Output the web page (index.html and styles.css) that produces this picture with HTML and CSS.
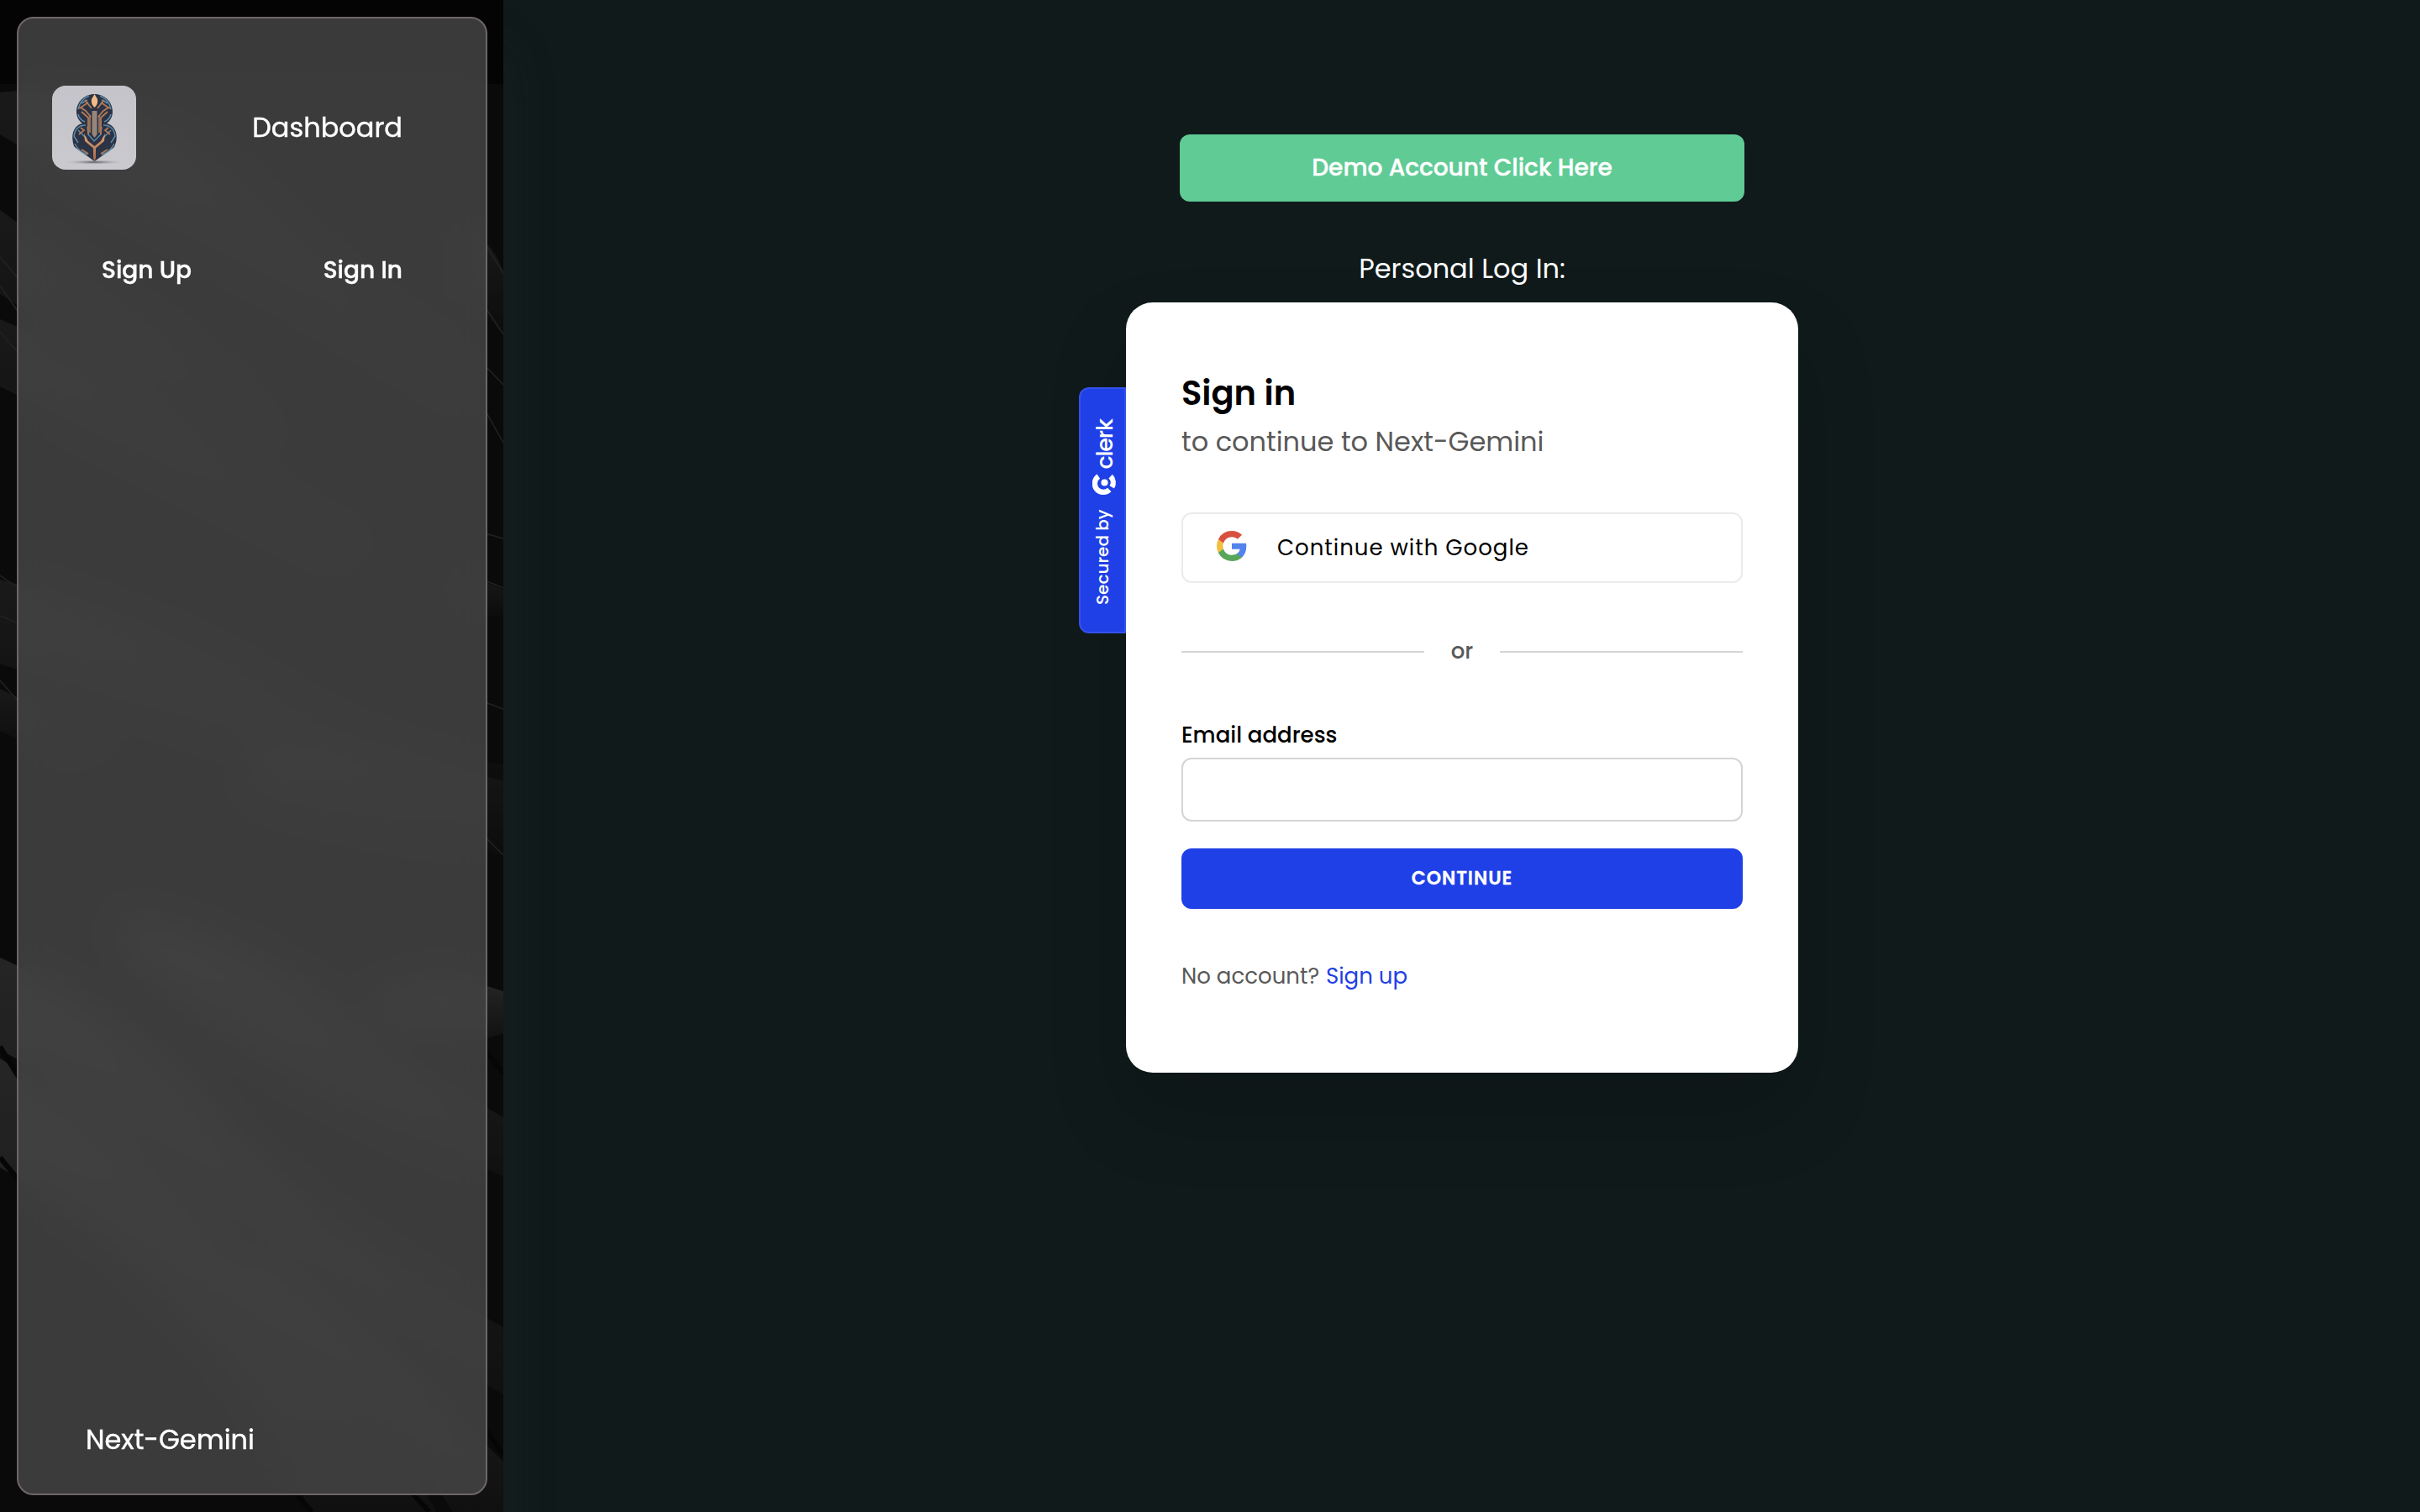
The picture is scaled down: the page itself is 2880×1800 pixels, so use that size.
FILE: index.html
```html
<!DOCTYPE html>
<html lang="en">
<head>
<meta charset="utf-8">
<title>Next-Gemini</title>
<link rel="stylesheet" href="styles.css">
</head>
<body>
<div class="app">
  <aside class="sidebar">
    <svg class="backdrop" viewBox="0 0 600 1800" preserveAspectRatio="none" aria-hidden="true">
      <defs>
        <linearGradient id="leaf" x1="0" y1="0" x2="0" y2="1">
          <stop offset="0" stop-color="#202020"/><stop offset="1" stop-color="#0e0e0e"/>
        </linearGradient>
        <linearGradient id="leafLight" x1="0" y1="0" x2="0" y2="1">
          <stop offset="0" stop-color="#303030"/><stop offset="1" stop-color="#141414"/>
        </linearGradient>
      </defs>
      <rect width="600" height="1800" fill="#0c0c0c"/>
      <rect width="600" height="100" fill="#030303"/>
      <g fill="url(#leaf)">
        <path d="M0 110Q150 90 300 230T560 420V500Q400 380 250 300T0 160Z"/>
        <path d="M0 250L150 360Q260 430 340 520L300 540Q150 440 0 350Z"/>
        <path d="M0 380Q120 430 240 520T440 640L400 680Q200 560 0 460Z"/>
        <path d="M0 690Q200 740 330 820T600 910V960Q400 930 260 880T0 790Z"/>
        <path d="M0 820Q60 850 140 880L90 900Q40 890 0 870Z"/>
        <path d="M560 276Q590 290 600 325V400L560 350Z"/>
        <path d="M560 685L600 702V735L560 728Z"/>
        <path d="M300 880Q420 880 600 930V1018Q470 1000 300 950Z"/>
      </g>
      <g fill="url(#leafLight)">
        <path d="M150 1090Q320 1120 460 1250L600 1330V1400Q420 1330 300 1250T150 1130Z"/>
        <path d="M0 1140Q160 1210 260 1330T600 1580V1660Q360 1520 230 1410T0 1250Z"/>
        <path d="M0 1260L140 1350Q300 1480 400 1620T520 1800H370Q300 1640 200 1540T0 1390Z"/>
        <path d="M440 1190Q520 1150 600 1180V1230Q520 1260 440 1210Z"/>
        <path d="M300 1490Q460 1600 600 1740V1800H540Q440 1640 300 1540Z"/>
      </g>
      <g class="veins">
        <path d="M0 306L22 332M0 340L22 372M0 395L22 420M0 685L22 700M0 733L22 742M0 810L22 835"/>
        <path d="M578 290L600 325M578 365L600 398M578 435L600 458M578 488L600 527M578 635L600 641M578 691L600 700M578 836L600 844M578 996L600 1018"/>
      </g>
      <g class="creases">
        <path d="M0 1246L24 1285M0 1378L24 1407M578 1250L600 1278M578 1700L600 1732M350 1776L372 1800M490 1776L512 1800"/>
      </g>
    </svg>
    <div class="panel">
      <header class="brand">
        <svg class="logo" viewBox="0 0 100 100" aria-label="Next-Gemini">
          <defs>
            <linearGradient id="paper" x1="0" y1="0" x2="0" y2="1"><stop offset="0" stop-color="#c4c4ca"/><stop offset="1" stop-color="#c9c9ce"/></linearGradient>
            <radialGradient id="ground"><stop offset="0" stop-color="#55555f"/><stop offset="1" stop-color="#c8c8cd" stop-opacity="0"/></radialGradient>
            <linearGradient id="copper" x1="0" y1="0" x2="0" y2="1"><stop offset="0" stop-color="#dca274"/><stop offset="1" stop-color="#a96844"/></linearGradient>
          </defs>
          <rect width="100" height="100" fill="url(#paper)"/>
          <ellipse cx="50" cy="91" rx="37" ry="3" fill="url(#ground)"/>
          <path d="M50.500 10C62 10 72 19 72 31C72 37 69 42 65 45C73 46 78 55 76.500 65Q75 72 73 74L50.500 90L28 74Q25 72 24.500 65C23 55 28 46 36 45C32 42 29 37 29 31C29 19 39 10 50.500 10Z" fill="#2b3345"/>
          <g fill="none" stroke="#5c8ba8" stroke-width="1.500">
            <path d="M44 12Q33 17 31 28M57 12Q68 17 70 28M35 21L42 17M66 21L59 17M31 34Q33 41 39 43M70 34Q68 41 62 43"/>
            <path d="M40 47Q28 47 26 60L31 68M61 47Q73 47 75 60L70 68M27 69Q32 79 42 82M74 69Q69 79 59 82M42 49L43 58L50 66L58 58L59 49M31 53L41 63M70 53L60 63"/>
          </g>
          <g fill="none" stroke="#b37a56" stroke-width="1.800">
            <path d="M43 20L34 26L40 30L46 37M58 20L67 26L61 30L55 37M39 17L47 27M62 17L54 27M35 31L43 38V58M66 31L58 38V58M32 27L36 25M69 27L65 25"/>
            <path d="M34 50L38 53L32 58M67 50L63 53L69 58M35 76L43 81M66 76L58 81"/>
          </g>
          <path d="M47.500 30H53.500V58L50.500 62L47.500 58Z" fill="#96867c"/>
          <path d="M50.500 10L54 16Q55 22 50.500 26Q46 22 47 16Z" fill="#f2bc86"/>
          <path d="M38 57L43 66L50.500 72L58 66L63 57L62 66L52 74.500V86L50.500 90L49 86V74.500L39 66Z" fill="url(#copper)"/>
          <path d="M45 36V56M56 36V56" stroke="#d39669" stroke-width="1.200"/>
        </svg>
        <a class="title">Dashboard</a>
      </header>
      <nav class="auth-links">
        <a>Sign Up</a>
        <a>Sign In</a>
      </nav>
      <footer class="footer">Next-Gemini</footer>
    </div>
  </aside>

  <main class="main">
    <button class="demo">Demo Account Click Here</button>
    <p class="personal">Personal Log In:</p>
    <section class="card">
      <div class="badge">
        <span>Secured by</span>
        <svg class="clerk-icon" viewBox="-15 -15 30 30" aria-hidden="true">
          <circle r="4.200" fill="#fff"/>
          <path d="M7.600 -7.400A10.600 10.600 0 1 0 -8.700 6" class="ring"/>
          <path d="M-5.600 9A10.600 10.600 0 0 0 7.600 7.400" class="ring"/>
        </svg>
        <span class="clerk">clerk</span>
      </div>
      <h1 class="heading">Sign in</h1>
      <p class="subtitle">to continue to Next-Gemini</p>
      <button class="google">
        <svg class="google-icon" viewBox="0 0 18 18" aria-hidden="true">
          <path fill="#5383ec" d="M17.640 9.200c0-.637-.057-1.251-.164-1.840H9v3.481h4.844a4.140 4.140 0 0 1-1.796 2.716v2.259h2.908c1.702-1.567 2.684-3.875 2.684-6.615z"/>
          <path fill="#58a65c" d="M9 18c2.430 0 4.467-.806 5.956-2.180l-2.908-2.259c-.806.540-1.837.860-3.048.860-2.344 0-4.328-1.584-5.036-3.711H.957v2.332A8.997 8.997 0 0 0 9 18z"/>
          <path fill="#f1bf42" d="M3.964 10.710A5.410 5.410 0 0 1 3.682 9c0-.593.102-1.170.282-1.710V4.958H.957A8.996 8.996 0 0 0 0 9c0 1.452.348 2.827.957 4.042l3.007-2.332z"/>
          <path fill="#d85140" d="M9 3.580c1.321 0 2.508.454 3.440 1.345l2.582-2.580C13.463.891 11.426 0 9 0A8.997 8.997 0 0 0 .957 4.958L3.964 7.290C4.672 5.163 6.656 3.580 9 3.580z"/>
        </svg>
        <span>Continue with Google</span>
      </button>
      <div class="divider"><span>or</span></div>
      <label class="label" for="email">Email address</label>
      <input class="input" id="email" type="email">
      <button class="continue">CONTINUE</button>
      <p class="signup">No account? <a>Sign up</a></p>
    </section>
  </main>
</div>
</body>
</html>
```
FILE: styles.css
```css
* {
  box-sizing: border-box;
}

body {
  margin: 0;
  background: #101a1b;
  color: #fff;
  font-family: Poppins, Inter, "Open Sans", sans-serif;
  font-size: 32px;
  line-height: 48px;
}

h1,
p {
  margin: 0;
}

button {
  border: 0;
  font-family: inherit;
  color: inherit;
}

.app {
  display: flex;
  width: 2880px;
  height: 1800px;
  overflow: hidden;
}

/* Sidebar */
.sidebar {
  position: relative;
  z-index: 1;
  display: flex;
  flex: none;
  width: 599px;
  margin-right: 1px;
  padding: 20px 19px 20px 20px;
  background: #070707;
  box-shadow: 0 60px 60px rgba(60, 62, 58, 0.2);
  -webkit-text-stroke: 0.4px #fff;
}

.backdrop {
  position: absolute;
  inset: 0;
  width: 100%;
  height: 100%;
  opacity: 0.75;
}

.veins,
.creases {
  fill: none;
  stroke: #2c2c2c;
  stroke-width: 1.5;
}

.creases {
  stroke: #060606;
  stroke-width: 6;
}

.panel {
  position: relative;
  display: flex;
  flex: 1;
  flex-direction: column;
  border: 2px solid #6f6666;
  border-radius: 20px;
  background: rgba(72, 71, 71, 0.81);
  backdrop-filter: blur(20px);
}

.brand {
  display: flex;
  align-items: center;
  justify-content: space-between;
  margin-top: 80px;
  padding: 0 99px 0 40px;
}

.logo {
  width: 100px;
  height: 100px;
  border-radius: 16px;
}

.auth-links {
  display: flex;
  justify-content: space-between;
  margin-top: 96px;
  padding: 0 99px;
  font-size: 28px;
  font-weight: 500;
}

.footer {
  margin-top: auto;
  padding: 0 80px 40px;
}

/* Sign-in area */
.main {
  display: flex;
  flex: 1;
  flex-direction: column;
  align-items: center;
  padding-top: 160px;
}

.demo {
  width: 672px;
  height: 80px;
  border-radius: 12px;
  background: #60cb95;
  font-size: 28px;
  font-weight: 500;
  -webkit-text-stroke: 0.4px #fff;
}

.personal {
  margin: 56px 0 16px;
}

.card {
  position: relative;
  display: flex;
  flex-direction: column;
  width: 800px;
  height: 917px;
  padding: 82px 66px 0;
  border-radius: 32px;
  background: #fff;
  color: #000;
  box-shadow: 0 48px 96px rgba(0, 0, 0, 0.16);
}

.badge {
  position: absolute;
  top: 394px;
  left: -56px;
  display: flex;
  align-items: center;
  width: 293px;
  height: 56px;
  padding-left: 32px;
  border: 2px solid #3551e9;
  border-radius: 12px 12px 0 0;
  background: #1f40e6;
  color: #fff;
  font-size: 20px;
  font-weight: 500;
  transform: rotate(-90deg);
  transform-origin: 0 0;
}

.clerk-icon {
  width: 29px;
  height: 29px;
  margin: 4px 0 0 18px;
}

.ring {
  fill: none;
  stroke: #fff;
  stroke-width: 6.6;
}

.clerk {
  margin: 6px 0 0 1px;
  font-size: 27px;
  font-weight: 500;
  letter-spacing: -1.2px;
}

.heading {
  font-size: 40px;
  font-weight: 600;
  line-height: 52px;
}

.subtitle {
  margin-top: 8px;
  color: #595959;
}

.google {
  display: flex;
  align-items: center;
  gap: 36px;
  height: 84px;
  margin-top: 60px;
  padding: 0 40px;
  border: 2px solid #ebebeb;
  border-radius: 12px;
  background: #fff;
  font-size: 26px;
  letter-spacing: 1px;
}

.google-icon {
  width: 36px;
  height: 36px;
  margin-top: -4px;
}

.divider {
  display: flex;
  align-items: center;
  gap: 32px;
  height: 48px;
  margin-top: 58px;
  color: #595959;
  font-size: 26px;
  font-weight: 500;
}

.divider span {
  margin-top: -2px;
}

.divider::before,
.divider::after {
  flex: 1;
  height: 2px;
  background: #d5d5d5;
  content: "";
}

.label {
  margin-top: 55px;
  font-size: 26px;
  font-weight: 500;
  line-height: 40px;
}

.input {
  height: 76px;
  margin-top: 7px;
  border: 2px solid #d5d5d5;
  border-radius: 12px;
  background: #fff;
}

.continue {
  height: 72px;
  margin-top: 32px;
  padding: 0 0 2px;
  border-radius: 12px;
  background: #1f40e6;
  color: #fff;
  font-size: 22px;
  font-weight: 600;
  letter-spacing: 1px;
  -webkit-text-stroke: 0.3px #fff;
}

.signup {
  margin-top: 56px;
  color: #595959;
  font-size: 26px;
}

.signup a {
  margin-left: 1px;
  color: #1f40e6;
}
```
